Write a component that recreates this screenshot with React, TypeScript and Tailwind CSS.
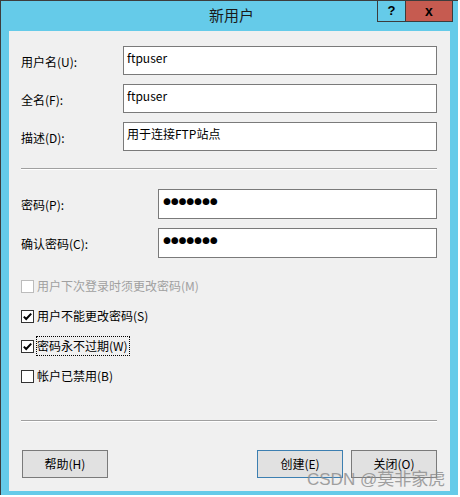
import React from "react";

const FONT = { fontFamily: '"Noto Sans CJK SC", "Noto Sans", sans-serif' };

function Check({ checked, disabled }: { checked?: boolean; disabled?: boolean }) {
  return (
    <div
      className={`w-[13px] h-[13px] shrink-0 border bg-white flex items-center justify-center ${
        disabled ? "border-[#bcbcbc]" : "border-[#333333]"
      }`}
    >
      {checked && (
        <svg width="11" height="11" viewBox="0 0 11 11">
          <polyline points="1.8,5.6 4.2,8 9.2,2.6" fill="none" stroke="#000" strokeWidth="2" />
        </svg>
      )}
    </div>
  );
}

function Field({ label, value, labelW }: { label: string; value: string; labelW: string }) {
  return (
    <div className="flex items-center">
      <div className={`${labelW} shrink-0 text-[12px] text-black pt-[2px]`}>{label}</div>
      <div className="flex-1 h-[29px] border border-[#7a7a7a] bg-white pl-[3px] pt-[3px] text-[12px] text-black leading-[16px]">
        {value}
      </div>
    </div>
  );
}

function Pwd({ label }: { label: string }) {
  return (
    <div className="flex items-center">
      <div className="w-[137px] shrink-0 text-[12px] text-black pt-[2px]">{label}</div>
      <div className="flex-1 h-[30px] border border-[#7a7a7a] bg-white pl-[4px] pt-[4px] flex items-start">
        {Array.from({ length: 7 }).map((_, i) => (
          <span key={i} className="w-[7.8px] text-center text-[7.5px] leading-[16px] text-black">
            ●
          </span>
        ))}
      </div>
    </div>
  );
}

export default function App() {
  return (
    <div className="w-[460px] h-[497px] bg-white relative" style={FONT}>
      <div className="w-[458px] h-[495px] bg-[#65cbe9] border-l border-t border-[#3d3d3d] flex flex-col">
        {/* title bar */}
        <div className="h-[30px] relative flex items-center justify-center">
          <span className="text-[15px] text-[#1a1a1a] pl-[4px] pb-[1px]">新用户</span>
          <div className="absolute top-[-1px] left-[376px] flex">
            <div className="w-[29px] h-[22px] border border-[#3c3c3c] flex items-center justify-center text-[13px] font-bold text-black" style={{ fontFamily: '"Liberation Sans", sans-serif' }}>
              ?
            </div>
            <div className="w-[47px] h-[22px] border border-l-0 border-[#3c3c3c] bg-[#c65b50] flex items-center justify-center text-[14px] font-bold text-black" style={{ fontFamily: '"Liberation Sans", sans-serif' }}>
              x
            </div>
          </div>
        </div>
        {/* content */}
        <div className="ml-[8px] w-[441px] h-[460px] bg-[#f0f0f0] pl-[12px] pr-[13px] pt-[15px] flex flex-col">
          <div className="flex flex-col gap-[9px]">
            <Field label="用户名(U):" value="ftpuser" labelW="w-[102px]" />
            <Field label="全名(F):" value="ftpuser" labelW="w-[102px]" />
            <Field label="描述(D):" value="用于连接FTP站点" labelW="w-[102px]" />
          </div>
          <div className="mt-[17px] h-[2px] border-t border-[#a0a0a0] border-b border-b-white" />
          <div className="mt-[19px] flex flex-col gap-[9px]">
            <Pwd label="密码(P):" />
            <Pwd label="确认密码(C):" />
          </div>
          <div className="mt-[13px] flex flex-col text-[12px]">
            <div className="h-[30px] flex items-center gap-[3px]">
              <Check disabled />
              <span className="text-[#a0a0a0]">用户下次登录时须更改密码(M)</span>
            </div>
            <div className="h-[30px] flex items-center gap-[3px]">
              <Check checked />
              <span className="text-black">用户不能更改密码(S)</span>
            </div>
            <div className="h-[30px] flex items-center gap-[2px]">
              <Check checked />
              <span className="text-black border border-dotted border-black h-[20px] flex items-center pr-[1px]">
                密码永不过期(W)
              </span>
            </div>
            <div className="h-[30px] flex items-center gap-[3px]">
              <Check />
              <span className="text-black">帐户已禁用(B)</span>
            </div>
          </div>
          <div className="mt-[29px] h-[2px] border-t border-[#a0a0a0] border-b border-b-white" />
          <div className="mt-[28px] flex items-center text-[12px] text-black">
            <div className="ml-[1px] w-[86px] h-[28px] border border-[#7a7a7a] bg-[#e1e1e1] flex items-center justify-center">
              帮助(H)
            </div>
            <div className="flex-1" />
            <div className="w-[86px] h-[28px] border border-[#3c7fb1] bg-[#e1e1e1] flex items-center justify-center">
              创建(E)
            </div>
            <div className="ml-[8px] w-[86px] h-[28px] border border-[#7a7a7a] bg-[#e1e1e1] flex items-center justify-center">
              关闭(O)
            </div>
          </div>
        </div>
      </div>
      <div
        className="absolute left-[307px] top-[468px] text-[17px] text-[#8c8c8c] opacity-80 leading-[24px]"
        style={{ fontFamily: '"Liberation Sans", "Noto Sans CJK SC", sans-serif' }}
      >
        CSDN @莫非家虎
      </div>
    </div>
  );
}
